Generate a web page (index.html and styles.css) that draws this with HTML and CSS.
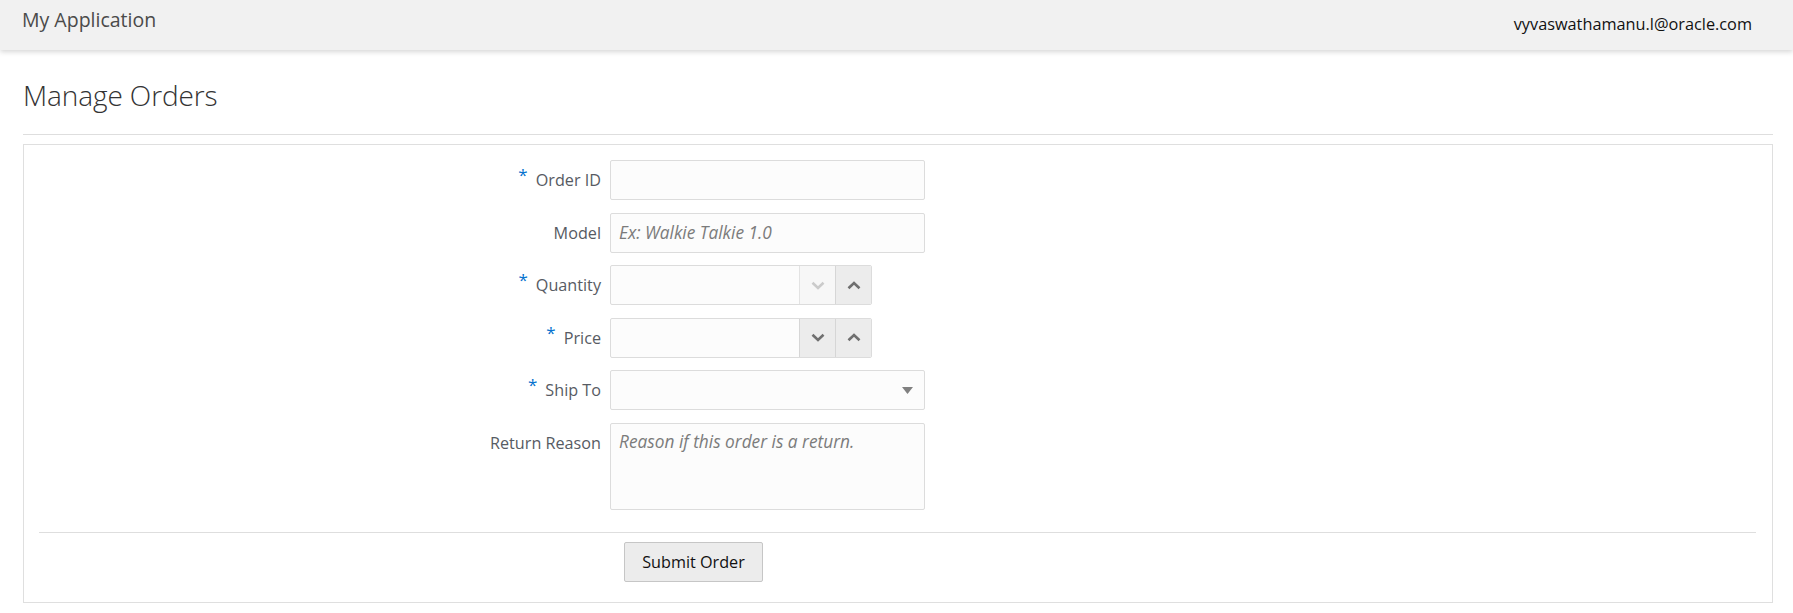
FILE: index.html
```html
<!DOCTYPE html>
<html lang="en">
<head>
<meta charset="utf-8">
<title>Manage Orders</title>
<link rel="stylesheet" href="styles.css">
</head>
<body>
<header class="app-header">
  <div class="app-title">My Application</div>
  <div class="app-user">vyvaswathamanu.l@oracle.com</div>
</header>
<main class="page">
  <h1 class="page-title">Manage Orders</h1>
  <hr class="page-rule">
  <section class="panel">
    <form class="order-form">
      <label class="field-label" for="orderId"><span class="req">*</span>Order ID</label>
      <input class="text-field" id="orderId" type="text">

      <label class="field-label" for="model">Model</label>
      <input class="text-field" id="model" type="text" placeholder="Ex: Walkie Talkie 1.0">

      <label class="field-label" for="qty"><span class="req">*</span>Quantity</label>
      <div class="spinner">
        <input class="spinner-input" id="qty" type="text">
        <span class="spin-btn spin-disabled"><svg width="14" height="9" viewBox="0 0 14 9"><path d="M1.5 1.8 L7 7 L12.5 1.8" fill="none" stroke="currentColor" stroke-width="2.6"/></svg></span>
        <span class="spin-btn"><svg width="14" height="9" viewBox="0 0 14 9"><path d="M1.5 7.2 L7 2 L12.5 7.2" fill="none" stroke="currentColor" stroke-width="2.6"/></svg></span>
      </div>

      <label class="field-label" for="price"><span class="req">*</span>Price</label>
      <div class="spinner">
        <input class="spinner-input" id="price" type="text">
        <span class="spin-btn"><svg width="14" height="9" viewBox="0 0 14 9"><path d="M1.5 1.8 L7 7 L12.5 1.8" fill="none" stroke="currentColor" stroke-width="2.6"/></svg></span>
        <span class="spin-btn"><svg width="14" height="9" viewBox="0 0 14 9"><path d="M1.5 7.2 L7 2 L12.5 7.2" fill="none" stroke="currentColor" stroke-width="2.6"/></svg></span>
      </div>

      <label class="field-label" for="shipTo"><span class="req">*</span>Ship To</label>
      <div class="select-field" id="shipTo">
        <span class="select-value"></span>
        <svg class="select-arrow" width="11" height="7" viewBox="0 0 11 7"><path d="M0 0 H11 L5.5 7 Z" fill="currentColor"/></svg>
      </div>

      <label class="field-label" for="reason">Return Reason</label>
      <textarea class="text-area" id="reason" placeholder="Reason if this order is a return."></textarea>
    </form>
    <div class="panel-footer">
      <button class="submit-btn" type="button">Submit Order</button>
    </div>
  </section>
</main>
</body>
</html>
```

FILE: styles.css
```css
* { box-sizing: border-box; }

html, body {
  margin: 0;
  padding: 0;
  background: #ffffff;
}

body {
  font-family: "Open Sans", "Noto Sans", "Liberation Sans", sans-serif;
  color: #333333;
}

.app-header {
  position: relative;
  z-index: 1;
  height: 50px;
  background: #f1f1f1;
  box-shadow: 0 2px 5px rgba(0, 0, 0, 0.16);
  display: flex;
  justify-content: space-between;
  align-items: flex-start;
  padding: 0 41px 0 22px;
}

.app-title {
  font-size: 19.5px;
  line-height: 24px;
  padding-top: 8px;
  color: #4a4a4a;
}

.app-user {
  font-size: 16.3px;
  line-height: 22px;
  padding-top: 13px;
  color: #111111;
}

.page {
  padding: 0 20px 0 23px;
}

.page-title {
  margin: 25px 0 0 0;
  font-size: 28px;
  font-weight: 300;
  line-height: 40px;
  color: #333333;
  letter-spacing: -0.1px;
}

.page-rule {
  margin: 19px 0 0 0;
  border: 0;
  border-top: 1px solid #dedede;
  height: 0;
}

.panel {
  margin-top: 9px;
  border: 1px solid #dfdfdf;
  padding: 15px 16px 20px 15px;
}

.order-form {
  display: grid;
  grid-template-columns: 562px 315px;
  column-gap: 9px;
  row-gap: 12.5px;
  align-items: start;
}

.field-label {
  justify-self: end;
  font-size: 16.2px;
  line-height: 40px;
  color: #575b63;
  white-space: nowrap;
}

.req {
  display: inline-block;
  position: relative;
  top: -5px;
  margin-right: 8px;
  color: #0572ce;
  font-size: 17px;
}

.text-field,
.text-area,
.select-field,
.spinner {
  height: 40px;
  border: 1px solid #dcdcdc;
  border-radius: 2px;
  background: #fcfcfc;
}

.text-field,
.text-area {
  width: 315px;
  margin: 0;
  padding: 0 8px;
  font-family: inherit;
  font-size: 17.3px;
  color: #333;
  outline: none;
}

.text-field::placeholder,
.text-area::placeholder {
  font-style: italic;
  color: #7b7b7b;
  opacity: 1;
}

.text-area {
  height: 87px;
  padding: 6px 8px;
  resize: none;
  line-height: 24px;
  display: block;
}

.spinner {
  width: 262px;
  display: flex;
  overflow: hidden;
}

.spinner-input {
  flex: 1;
  min-width: 0;
  border: 0;
  background: transparent;
  outline: none;
  padding: 0 8px;
  font-family: inherit;
  font-size: 17.3px;
}

.spin-btn {
  width: 36px;
  flex: none;
  display: flex;
  align-items: center;
  justify-content: center;
  border-left: 1px solid #d6d6d6;
  background: #ececec;
  color: #707070;
}

.spin-disabled {
  background: #f7f7f7;
  color: #cbcbcb;
  border-left-color: #e3e3e3;
}

.select-field {
  width: 315px;
  display: flex;
  align-items: center;
  justify-content: space-between;
  padding: 0 11px 0 8px;
}

.select-arrow {
  color: #808080;
}

.panel-footer {
  margin-top: 22px;
  border-top: 1px solid #dedede;
  padding-top: 9px;
}

.submit-btn {
  margin-left: 585px;
  width: 139px;
  height: 40px;
  border: 1px solid #c6c6c6;
  border-radius: 2px;
  background: #ececec;
  font-family: inherit;
  font-size: 16.2px;
  color: #111;
  padding: 0;
  cursor: pointer;
}
```
